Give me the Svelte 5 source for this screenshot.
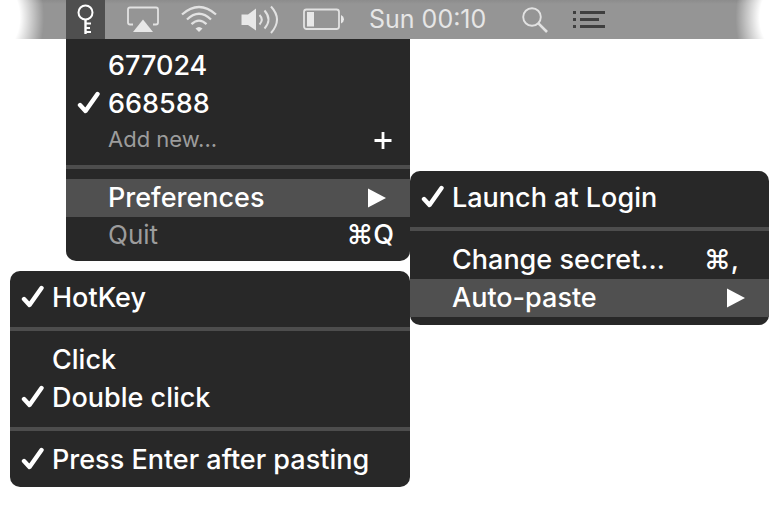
<script>
	const menus = {
		main: [
			{ label: '677024' },
			{ label: '668588', checked: true },
			{ label: 'Add new...', muted: true, small: true, plus: true },
			null,
			{ label: 'Preferences', active: true, submenu: true },
			{ label: 'Quit', muted: true, short: true, shortcut: '⌘Q' }
		],
		autoPaste: [
			{ label: 'HotKey', checked: true },
			null,
			{ label: 'Click' },
			{ label: 'Double click', checked: true },
			null,
			{ label: 'Press Enter after pasting', checked: true }
		],
		preferences: [
			{ label: 'Launch at Login', checked: true },
			null,
			{ label: 'Change secret...', shortcut: '⌘,' },
			{ label: 'Auto-paste', active: true, submenu: true }
		]
	};
</script>

{#snippet menu(items, name)}
	<div class="menu {name}" role="menu">
		{#each items as item}
			{#if item}
				<button
					type="button"
					class="item"
					role="menuitem"
					class:active={item.active}
					class:muted={item.muted}
					class:small={item.small}
					class:short={item.short}
				>
					<span class="tick">
						{#if item.checked}
							<svg width="24" height="24" viewBox="0 0 24 24">
								<path d="M4 14 L9.5 20 L21.5 3" fill="none" stroke="#fff" stroke-width="4.4" stroke-linecap="round" stroke-linejoin="round" />
							</svg>
						{/if}
					</span>
					<span class="label">{item.label}</span>
					{#if item.shortcut}
						<span class="shortcut">{item.shortcut}</span>
					{/if}
					{#if item.plus}
						<svg class="plus" width="18" height="20" viewBox="0 0 18 20">
							<path d="M9 3 V20 M0.5 11.5 H17.5" stroke="#fff" stroke-width="2.8" />
						</svg>
					{/if}
					{#if item.submenu}
						<svg class="arrow" width="18" height="20" viewBox="0 0 18 20">
							<path d="M0 0.5 L18 10 L0 19.5 Z" fill="#fff" />
						</svg>
					{/if}
				</button>
			{:else}
				<hr />
			{/if}
		{/each}
	</div>
{/snippet}

<header>
	<button type="button" class="key" aria-label="Codes">
		<svg width="39" height="39" viewBox="0 0 39 39" fill="none" stroke="#fff">
			<circle cx="19.5" cy="12.5" r="7" stroke-width="2" />
			<path d="M19.5 19.5 V34" stroke-width="2.4" />
			<path d="M20 23.5 H25 M20 28 H24 M20 32 H25" stroke-width="1.8" />
		</svg>
	</button>
	<svg class="airplay" width="34" height="39" viewBox="0 0 34 39">
		<path d="M7 24.5 H4 Q2 24.5 2 22.5 V9.5 Q2 7.5 4 7.5 H30 Q32 7.5 32 9.5 V22.5 Q32 24.5 30 24.5 H27" fill="none" stroke="#e2e2e2" stroke-width="1.8" />
		<path d="M17 19.5 L27 32 H7 Z" fill="#e8e8e8" />
	</svg>
	<svg class="wifi" width="36" height="39" viewBox="0 0 36 39" fill="none" stroke="#e2e2e2" stroke-width="2.3">
		<path d="M1 14.5 Q18 -0.5 35 14.5" />
		<path d="M6 19.5 Q18 8 30 19.5" />
		<path d="M10.5 24.2 Q18 17 25.5 24.2" />
		<path d="M14.5 28.5 Q18 25.5 21.5 28.5 L18 32 Z" fill="#e8e8e8" stroke="none" />
	</svg>
	<svg class="volume" width="38" height="39" viewBox="0 0 38 39" fill="none" stroke="#e2e2e2" stroke-width="2">
		<path d="M0.5 14.5 H7 L15 8.5 V30.5 L7 25 H0.5 Z" fill="#e8e8e8" stroke="none" />
		<path d="M18.5 15 Q23 19.5 18.5 24.5" />
		<path d="M23.5 10.5 Q31.5 19.5 23.5 28.5" />
		<path d="M30 6.5 Q42 19.5 30 33" />
	</svg>
	<svg class="battery" width="42" height="39" viewBox="0 0 42 39">
		<rect x="1" y="9.5" width="35" height="19.5" rx="2.5" fill="none" stroke="#e2e2e2" stroke-width="1.8" />
		<rect x="4" y="12" width="7" height="14.5" fill="#e8e8e8" />
		<path d="M38 15 Q41 16.5 41 19.2 Q41 22 38 23.5 Z" fill="#e8e8e8" />
	</svg>
	<time>Sun 00:10</time>
	<svg class="search" width="26" height="39" viewBox="0 0 26 39" fill="none" stroke="#e2e2e2">
		<circle cx="10" cy="17" r="8.8" stroke-width="1.9" />
		<path d="M16.2 23.2 L25 32" stroke-width="2.6" />
	</svg>
	<svg class="list" width="32" height="39" viewBox="0 0 32 39" stroke="#3f3f3f" stroke-width="3">
		<path d="M0 12.5 H3 M7 12.5 H32 M0 19.5 H3 M7 19.5 H26 M0 26.5 H3 M7 26.5 H32" />
	</svg>
</header>

<main>
	<div class="left">
		{@render menu(menus.main, 'dropdown')}
		{@render menu(menus.autoPaste, 'auto-paste')}
	</div>
	<div class="right">
		{@render menu(menus.preferences, 'preferences')}
	</div>
</main>

<style>
	:global(body) {
		margin: 0;
		background: #fff;
		font-family: Inter, sans-serif;
	}
	svg {
		display: block;
		flex: none;
	}
	header {
		display: flex;
		align-items: center;
		height: 39px;
		padding-left: 66px;
		color: #e6e6e6;
		background:
			radial-gradient(ellipse 44px 70px at 0 45%, #fff 45%, #fff0 100%) left / 50% 100% no-repeat,
			radial-gradient(ellipse 44px 70px at 100% 45%, #fff 45%, #fff0 100%) right / 50% 100% no-repeat,
			linear-gradient(#8c8c8c, #959595 4px);
	}
	.key {
		border: none;
		padding: 0;
		background: #4f4f4f;
	}
	.airplay {
		margin-left: 21px;
	}
	.wifi {
		margin-left: 21px;
	}
	.volume {
		margin-left: 24px;
	}
	.battery {
		margin-left: 24px;
	}
	time {
		margin-left: 24px;
		font-size: 25px;
		line-height: 39px;
		white-space: nowrap;
	}
	.search {
		margin-left: 36px;
	}
	.list {
		margin-left: 25px;
	}
	main {
		display: grid;
		grid-template-columns: 400fr 359fr;
		padding: 0 10px;
	}
	.left {
		display: flex;
		flex-direction: column;
		gap: 10px;
	}
	.right {
		padding-top: 132px;
	}
	.menu {
		padding: 8px 0;
		border-radius: 10px;
		background: #282828;
	}
	.dropdown {
		margin-left: 56px;
		border-radius: 0 0 10px 10px;
	}
	.item {
		display: flex;
		align-items: center;
		width: 100%;
		height: 38px;
		padding: 0 16px 0 10px;
		border: none;
		background: none;
		color: #fff;
		font-family: inherit;
		font-size: 27px;
		font-weight: 500;
		text-align: left;
		white-space: nowrap;
	}
	.active {
		background: #505050;
	}
	.muted {
		color: #9c9c9c;
	}
	.small {
		height: 32px;
		font-size: 22px;
		font-weight: 400;
	}
	.short {
		height: 36px;
	}
	.short .label {
		font-size: 26px;
		font-weight: 400;
	}
	.tick {
		flex: none;
		width: 32px;
		padding-bottom: 2px;
	}
	.label {
		flex: 1;
		padding-bottom: 2px;
	}
	.small .label {
		padding-bottom: 0;
	}
	.shortcut {
		padding-bottom: 2px;
		color: #fff;
	}
	.preferences .shortcut {
		margin-right: 14px;
	}
	.plus {
		margin-right: 2px;
	}
	.arrow {
		margin-right: 8px;
	}
	hr {
		height: 4px;
		margin: 10px 0;
		border: none;
		background: #4d4d4d;
	}
</style>
